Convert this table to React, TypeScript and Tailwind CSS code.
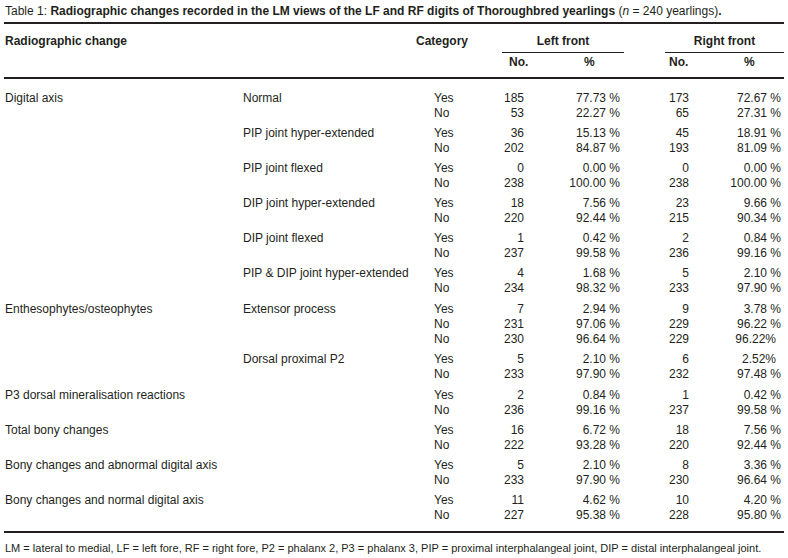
type Row = [string, string, string, string, string];

type Group = { main?: string; sub?: string; extra?: boolean; rows: Row[] };

const groups: Group[] = [
  {
    main: 'Digital axis',
    sub: 'Normal',
    rows: [
      ['Yes', '185', '77.73 %', '173', '72.67 %'],
      ['No', '53', '22.27 %', '65', '27.31 %'],
    ],
  },
  {
    sub: 'PIP joint hyper-extended',
    rows: [
      ['Yes', '36', '15.13 %', '45', '18.91 %'],
      ['No', '202', '84.87 %', '193', '81.09 %'],
    ],
  },
  {
    sub: 'PIP joint flexed',
    rows: [
      ['Yes', '0', '0.00 %', '0', '0.00 %'],
      ['No', '238', '100.00 %', '238', '100.00 %'],
    ],
  },
  {
    sub: 'DIP joint hyper-extended',
    rows: [
      ['Yes', '18', '7.56 %', '23', '9.66 %'],
      ['No', '220', '92.44 %', '215', '90.34 %'],
    ],
  },
  {
    sub: 'DIP joint flexed',
    rows: [
      ['Yes', '1', '0.42 %', '2', '0.84 %'],
      ['No', '237', '99.58 %', '236', '99.16 %'],
    ],
  },
  {
    sub: 'PIP & DIP joint hyper-extended',
    rows: [
      ['Yes', '4', '1.68 %', '5', '2.10 %'],
      ['No', '234', '98.32 %', '233', '97.90 %'],
    ],
  },
  {
    main: 'Enthesophytes/osteophytes',
    sub: 'Extensor process',
    extra: true,
    rows: [
      ['Yes', '7', '2.94 %', '9', '3.78 %'],
      ['No', '231', '97.06 %', '229', '96.22 %'],
      ['No', '230', '96.64 %', '229', '96.22%'],
    ],
  },
  {
    sub: 'Dorsal proximal P2',
    rows: [
      ['Yes', '5', '2.10 %', '6', '2.52%'],
      ['No', '233', '97.90 %', '232', '97.48 %'],
    ],
  },
  {
    main: 'P3 dorsal mineralisation reactions',
    extra: true,
    rows: [
      ['Yes', '2', '0.84 %', '1', '0.42 %'],
      ['No', '236', '99.16 %', '237', '99.58 %'],
    ],
  },
  {
    main: 'Total bony changes',
    rows: [
      ['Yes', '16', '6.72 %', '18', '7.56 %'],
      ['No', '222', '93.28 %', '220', '92.44 %'],
    ],
  },
  {
    main: 'Bony changes and abnormal digital axis',
    rows: [
      ['Yes', '5', '2.10 %', '8', '3.36 %'],
      ['No', '233', '97.90 %', '230', '96.64 %'],
    ],
  },
  {
    main: 'Bony changes and normal digital axis',
    rows: [
      ['Yes', '11', '4.62 %', '10', '4.20 %'],
      ['No', '227', '95.38 %', '228', '95.80 %'],
    ],
  },
];

function DataRow({ row, main, sub }: { row: Row; main?: string; sub?: string }) {
  const [cat, ln, lp, rn, rp] = row;
  return (
    <div className="flex h-[15px] items-center whitespace-nowrap">
      <div className="w-[239px] pl-px">{main}</div>
      <div className="w-[191px]">{sub}</div>
      <div className="w-[46px]">{cat}</div>
      <div className="w-[44px] text-right">{ln}</div>
      <div className="w-[96px] text-right">{lp}</div>
      <div className="w-[69px] text-right">{rn}</div>
      <div className={'w-[92px] text-right ' + (rp.includes(' ') ? '' : 'pr-[5px]')}>{rp}</div>
    </div>
  );
}

export default function App() {
  return (
    <div
      className="h-[558px] w-[788px] overflow-hidden bg-white text-[12px] leading-[15px] text-[#231f20]"
      style={{ fontFamily: '"Liberation Sans", Arial, sans-serif' }}
    >
      <div className="pl-[5px] pt-[4px] whitespace-nowrap">
        Table 1: <b>Radiographic changes recorded in the LM views of the LF and RF digits of Thoroughbred yearlings</b> (
        <i>n</i> = 240 yearlings)<b>.</b>
      </div>

      <div className="mx-[4px] mt-[3px] w-[780px]">
        <div className="h-[2px] bg-[#231f20]" />

        {/* header */}
        <div className="flex pt-[10px] font-bold">
          <div className="w-[412px] pl-px">Radiographic change</div>
          <div className="w-[86px]">Category</div>
          <div className="flex w-[122px] flex-col">
            <div className="text-center">Left front</div>
            <div className="mt-[3px] h-px bg-[#231f20]" />
            <div className="mt-[2px] flex">
              <div className="w-[82px] pl-[7px]">No.</div>
              <div>%</div>
            </div>
          </div>
          <div className="w-[41px]" />
          <div className="flex w-[119px] flex-col">
            <div className="text-center">Right front</div>
            <div className="mt-[3px] h-px bg-[#231f20]" />
            <div className="mt-[2px] flex">
              <div className="w-[79px] pl-[4px]">No.</div>
              <div>%</div>
            </div>
          </div>
        </div>
        <div className="mt-[7px] h-[2px] bg-[#231f20]" />

        {/* body */}
        <div className="flex flex-col gap-[5px] pt-[12px]">
          {groups.map((g, gi) => (
            <div key={gi} className={g.extra ? 'mt-px' : ''}>
              {g.rows.map((r, ri) => (
                <DataRow key={ri} row={r} main={ri === 0 ? g.main : undefined} sub={ri === 0 ? g.sub : undefined} />
              ))}
            </div>
          ))}
        </div>
        <div className="mt-[8px] h-[2px] bg-[#231f20]" />
      </div>

      <div className="mt-[8px] pl-[5px] text-[11px] leading-[14px] whitespace-nowrap">
        LM = lateral to medial, LF = left fore, RF = right fore, P2 = phalanx 2, P3 = phalanx 3, PIP = proximal
        interphalangeal joint, DIP = distal interphalangeal joint.
      </div>
    </div>
  );
}
